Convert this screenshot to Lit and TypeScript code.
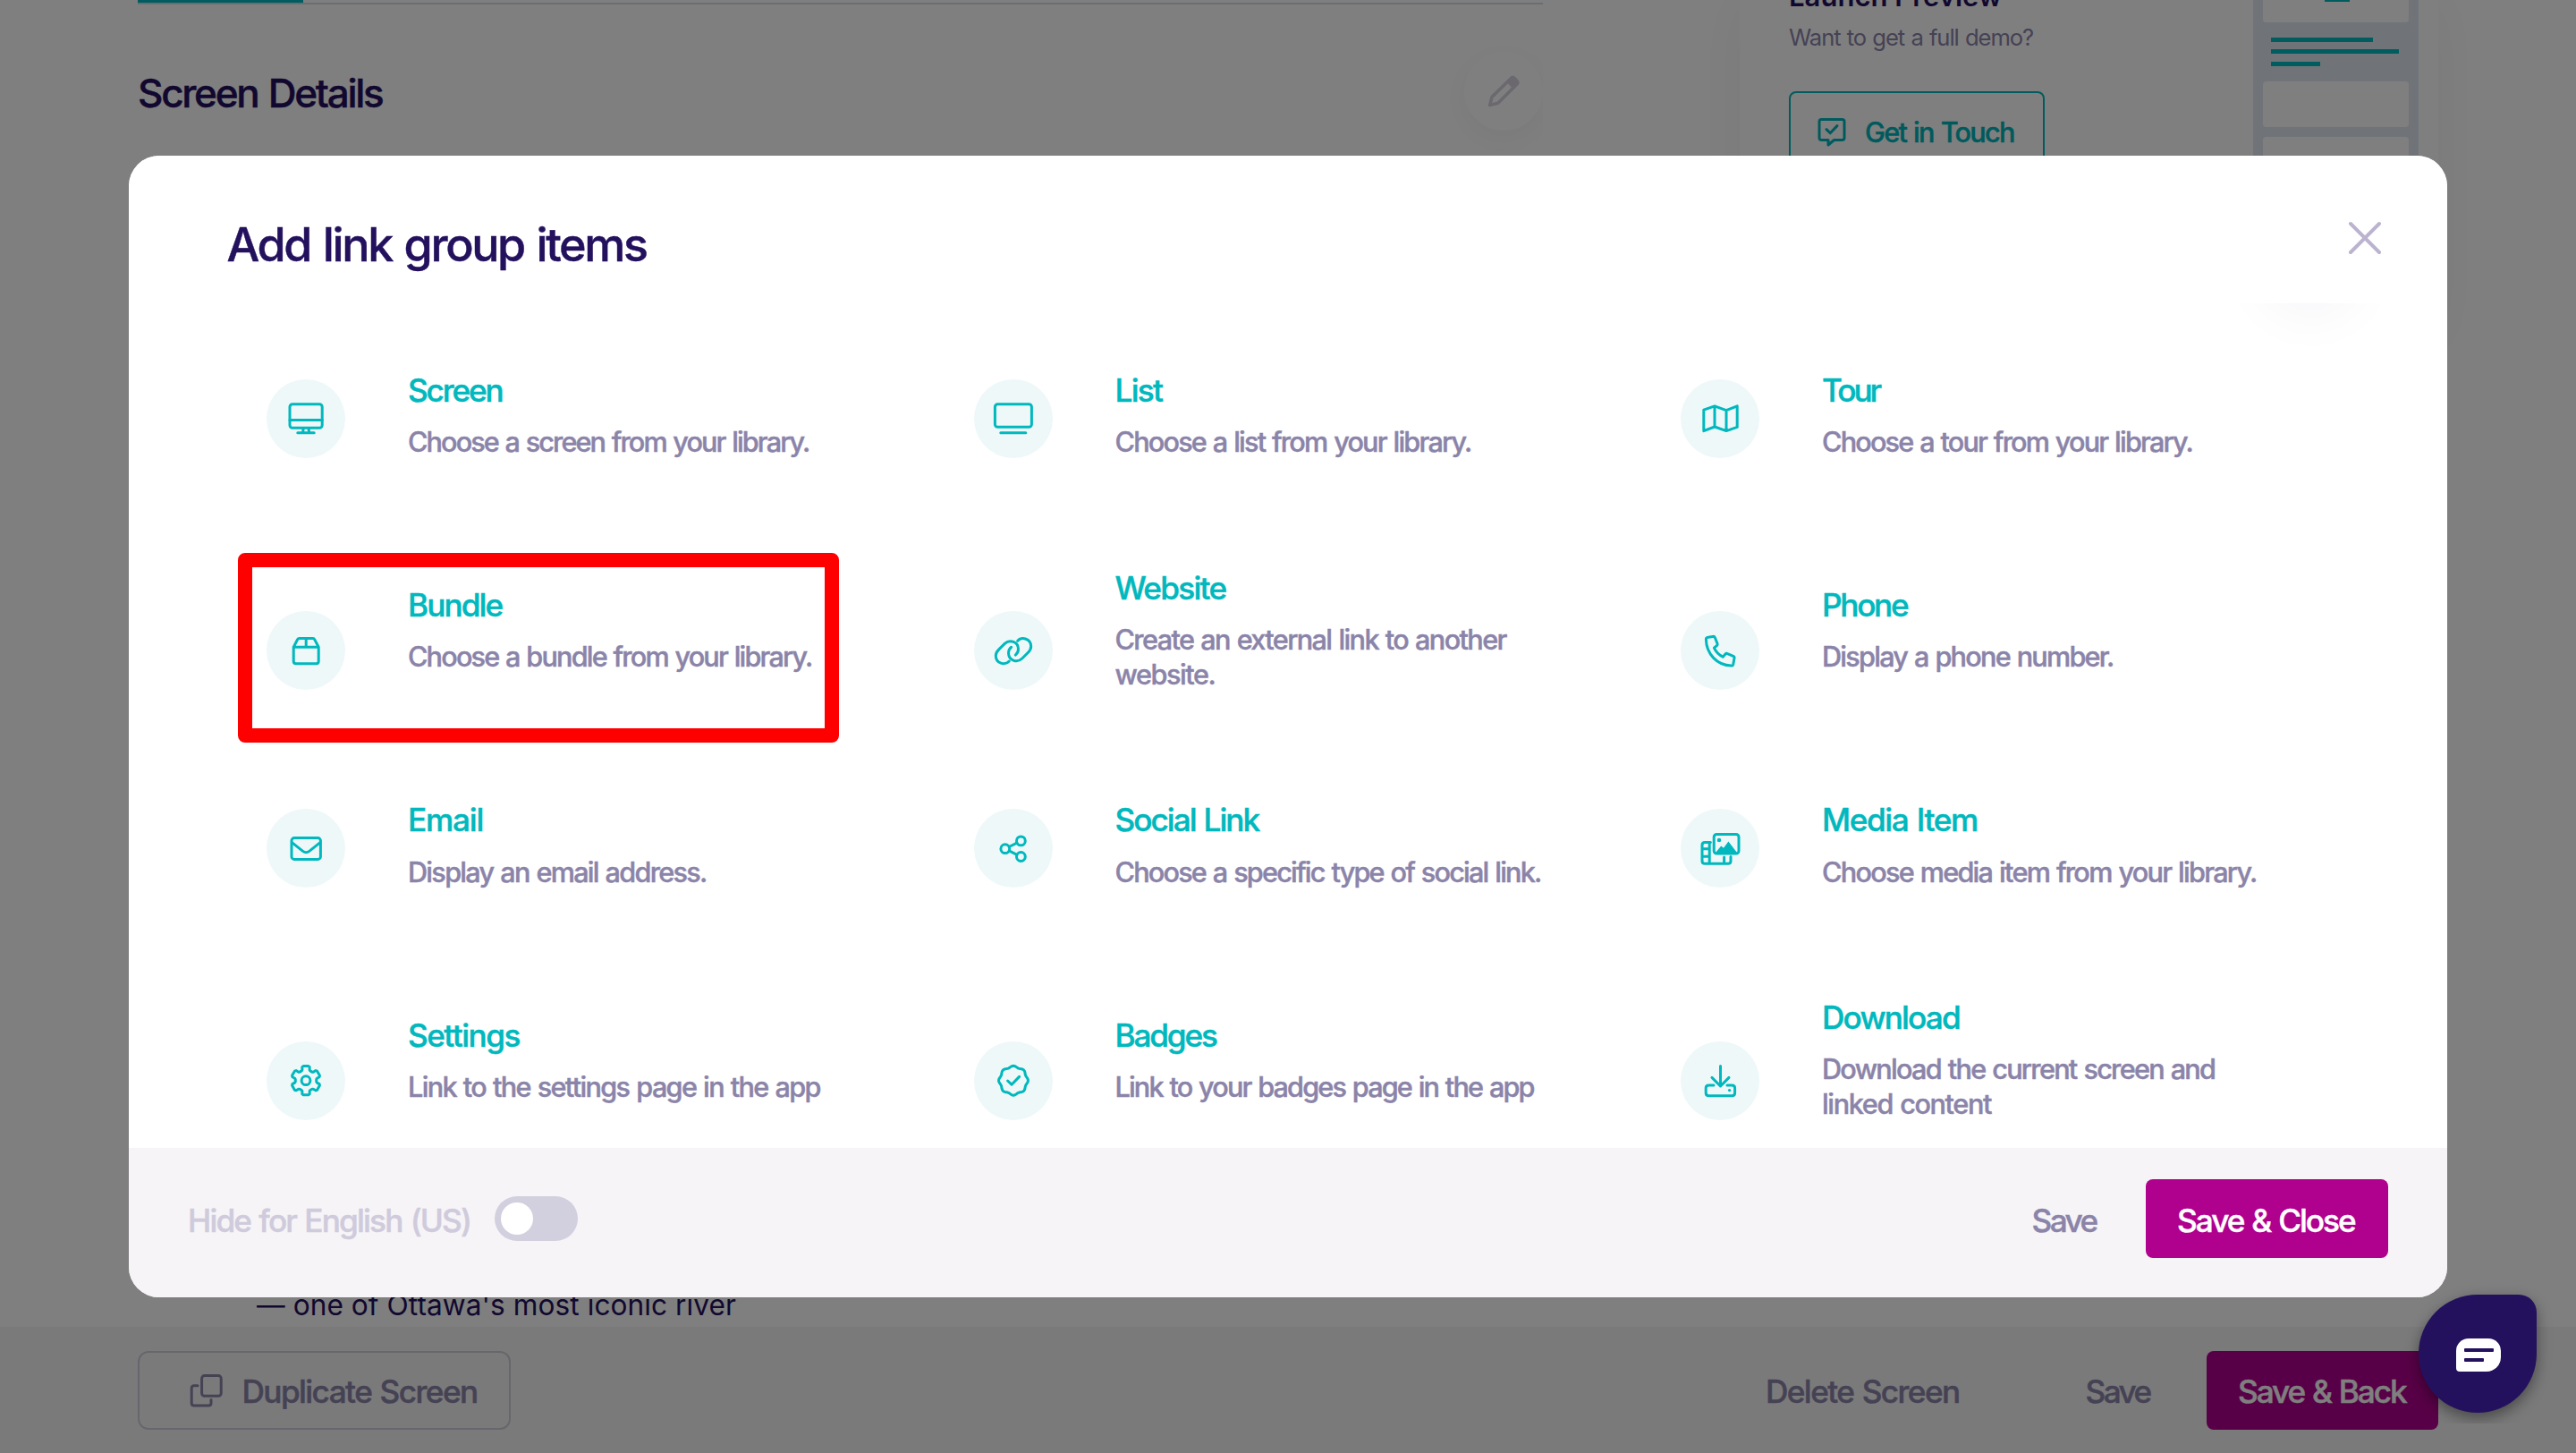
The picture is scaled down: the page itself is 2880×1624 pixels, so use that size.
import { LitElement, html, css, svg, nothing } from "lit";
import { customElement, property } from "lit/decorators.js";

const FAMILY = `Inter, "Liberation Sans", sans-serif`;
const MEDIUM = 500;
const ctx = document.createElement("canvas").getContext("2d")!;

/** Letter and word spacing that make one line of text span the given width. */
function spacing(text: string, width: number, size: number, weight: number): { letter: string; word: string } {
  ctx.font = `${weight} ${size}px ${FAMILY}`;
  const m = ctx.measureText(text);
  const ink = m.actualBoundingBoxLeft + m.actualBoundingBoxRight;
  const word = width < ink ? size * 0.045 : 0;
  const gaps = text.split(" ").length - 1;
  return { letter: ((width - ink - word * gaps) / (text.length - 1)).toFixed(3), word: word.toFixed(2) };
}

@customElement("fit-line")
export class FitLine extends LitElement {
  @property() text = "";
  @property({ type: Number }) width = 0;
  @property({ type: Number }) size = 30;
  @property({ type: Number }) weight = MEDIUM;

  static styles = css`
    :host { display: block; white-space: nowrap; }
    span { display: block; }
    .medium { -webkit-text-stroke: 0.45px currentColor; }
  `;

  render() {
    const s = spacing(this.text, this.width, this.size, this.weight);
    return html`<span class=${this.weight === MEDIUM ? "medium" : "plain"} style="font-size:${this.size}px;font-weight:${this.weight};letter-spacing:${s.letter}px;word-spacing:${s.word}px">${this.text}</span>`;
  }
}

const line = (text: string, width: number, size: number, weight = MEDIUM, cls = "") =>
  html`<fit-line class=${cls} .text=${text} .width=${width} .size=${size} .weight=${weight}></fit-line>`;

function polar(r: number, deg: number): string {
  const a = ((deg - 90) * Math.PI) / 180;
  return `${(44 + r * Math.cos(a)).toFixed(2)} ${(43.7 + r * Math.sin(a)).toFixed(2)}`;
}

const gearPath =
  "M" +
  [0, 60, 120, 180, 240, 300]
    .map((t) => [polar(11.8, t - 24), polar(12.6, t - 19), polar(15.6, t - 15.5), polar(16.4, t - 10), polar(16.4, t + 10), polar(15.6, t + 15.5), polar(12.6, t + 19), polar(11.8, t + 24)].join(" L"))
    .join(" L") +
  "Z";

const sealPath =
  "M" +
  Array.from({ length: 96 }, (_, i) => {
    const d = i * 3.75;
    return polar(15.6 + 0.85 * Math.cos((8 * d * Math.PI) / 180), d);
  }).join(" L") +
  "Z";

const icons: Record<string, unknown> = {
  screen: svg`<rect x="26" y="27.8" width="36.2" height="26.4" rx="3"/><path d="M26 45.5H62.2M34.8 59.7H53.2M41.2 54.5L40.6 59.5M47 54.5L47.6 59.5"/>`,
  list: svg`<rect x="23.4" y="27.8" width="41" height="25.4" rx="3"/><path d="M29.8 59.7H57.8"/>`,
  tour: svg`<path d="M25.8 34.2L38 29.8L51 34.6L63.2 29.8V53.4L51 57.6L38 53L25.8 57.6ZM38 29.8V53M51 34.6V57.6"/>`,
  bundle: svg`<path d="M30.2 40.2L34.6 31.8Q35.2 30.6 36.6 30.6H51.8Q53.2 30.6 53.8 31.8L58.2 40.2V56Q58.2 58.8 55.4 58.8H33Q30.2 58.8 30.2 56ZM30.2 40.2H58.2M44.2 30.6V40.2"/>`,
  website: svg`<path d="M48.7 33.3C53.5 28 63.7 31 63.7 39.5C63.7 42.5 62.3 44.5 60 46.8L53.7 53C48 58.5 38.5 55 38.5 46.8C38.5 44 39.5 42 41.7 40.3M39.3 56.1C34.5 61.4 24.3 58.4 24.3 49.9C24.3 46.9 25.7 44.9 28 42.6L34.3 36.4C40 30.9 49.5 34.4 49.5 42.6C49.5 45.4 48.5 47.4 46.3 49.1"/>`,
  phone: svg`<path d="M30.8 29.3L36 28.4C37.2 28.2 38 28.8 38.4 29.8L41 36.2C41.4 37.2 41.1 38 40.4 38.7L37.4 41.2C39.5 45.8 42.6 49 47.2 51.2L49.8 48.2C50.5 47.4 51.4 47.2 52.3 47.6L58.8 50.3C59.8 50.8 60.3 51.5 60 52.6L58.8 59.3C58.5 60.6 57.8 61 56.5 61C41 60.8 28.6 48 28.4 31.6C28.4 30.3 29.2 29.5 30.8 29.3Z"/>`,
  email: svg`<rect x="28" y="32.6" width="32.4" height="23.8" rx="3"/><path d="M28.4 37.6L40.6 47.4Q44.2 50.2 47.8 47.4L60 37.6"/>`,
  social: svg`<circle cx="34.8" cy="44.7" r="4.9"/><circle cx="52.4" cy="35.9" r="4.9"/><circle cx="52.4" cy="53.5" r="4.9"/><path d="M39.2 42.5L48 38.1M39.2 46.9L48 51.3"/>`,
  media: svg`<rect x="37.2" y="28.4" width="27.8" height="21.6" rx="3"/><path class="solid" d="M38.6 49.5L45.2 41.4L48 43.8L53.4 36.4L63.4 49.5Z"/><circle class="solid" cx="43" cy="35" r="2.3"/><path d="M33.4 37.6H27Q24 37.6 24 40.6V58.2Q24 61.2 27 61.2H53Q56 61.2 56 58.2V53.6M32.2 37.6V61.2M48.6 54V61.2M24 44.8H32M24 53.2H32"/>`,
  settings: svg`<path d=${gearPath}/><circle cx="44" cy="43.7" r="4.9"/>`,
  badges: svg`<path d=${sealPath}/><path d="M37.6 44L42 48.2L50.6 39.4"/>`,
  download: svg`<path d="M44.5 27.4V50M35 40.4L44.5 50L54 40.4M37 49H31.4Q28.2 49 28.2 52V57.6Q28.2 60.8 31.4 60.8H57.4Q60.6 60.8 60.6 57.6V52Q60.6 49 57.4 49H52"/><circle class="solid" cx="54.6" cy="54.6" r="1.7"/>`,
};

interface Choice {
  icon: string;
  title: [string, number];
  lines: [string, number][];
  marked?: boolean;
}

const choices: Choice[] = [
  { icon: "screen", title: ["Screen", 104.5], lines: [["Choose a screen from your library.", 447]] },
  { icon: "list", title: ["List", 52.5], lines: [["Choose a list from your library.", 396.5]] },
  { icon: "tour", title: ["Tour", 65.5], lines: [["Choose a tour from your library.", 412.5]] },
  { icon: "bundle", title: ["Bundle", 104.5], lines: [["Choose a bundle from your library.", 450]], marked: true },
  { icon: "website", title: ["Website", 125], lines: [["Create an external link to another", 438], ["website.", 111]] },
  { icon: "phone", title: ["Phone", 95], lines: [["Display a phone number.", 323]] },
  { icon: "email", title: ["Email", 81.5], lines: [["Display an email address.", 331]] },
  { icon: "social", title: ["Social Link", 162], lines: [["Choose a specific type of social link.", 474.5]] },
  { icon: "media", title: ["Media Item", 171], lines: [["Choose media item from your library.", 484]] },
  { icon: "settings", title: ["Settings", 124.5], lines: [["Link to the settings page in the app", 459.5]] },
  { icon: "badges", title: ["Badges", 112.5], lines: [["Link to your badges page in the app", 467]] },
  { icon: "download", title: ["Download", 152], lines: [["Download the current screen and", 437], ["linked content", 188]] },
];

@customElement("app-root")
export class AppRoot extends LitElement {
  static styles = css`
    :host { display: block; position: relative; width: 2880px; height: 1624px; overflow: hidden; background: #fff; font-family: Inter, "Liberation Sans", sans-serif; color: #24115e; }
    * { box-sizing: border-box; }
    svg { display: block; fill: none; stroke: currentColor; stroke-width: 3; stroke-linecap: round; stroke-linejoin: round; }
    .solid { fill: currentColor; stroke: none; }

    .page { display: flex; flex-direction: column; height: 1624px; }
    .content { display: flex; height: 1483px; }
    .main { display: flex; flex-direction: column; width: 1571px; margin-left: 154px; overflow: hidden; }
    .tabs { height: 5px; border-bottom: 2px solid #d3dde6; flex: none; }
    .tab { width: 185px; height: 3px; background: #00b8bd; }
    .heading { display: flex; justify-content: space-between; height: 97px; margin-top: 52.7px; line-height: 60px; }
    .heading .name { padding-top: 16px; }
    .edit { width: 88px; height: 88px; border-radius: 50%; color: #d6d2df; background: #fff; box-shadow: 0 8px 36px rgba(36, 17, 94, 0.05); flex: none; }
    .paragraph { margin-top: auto; padding-left: 133px; height: 44px; line-height: 40px; }

    .card { display: flex; justify-content: space-between; width: 781px; height: 380px; margin-left: 220px; padding: 0 22px 0 55px; background: #fff; box-shadow: 0 0 60px rgba(36, 17, 94, 0.05); }
    .pitch .lead { line-height: 40px; margin-top: -24px; }
    .pitch .ask { line-height: 36px; margin-top: 7.5px; color: #8b84a9; height: 36px; }
    .touch { display: flex; align-items: center; width: 286px; height: 92px; margin-top: 42px; padding-left: 30px; gap: 21px; border: 2px solid #00b8bd; border-radius: 8px; color: #00b5ba; line-height: 40px; }
    .mock { width: 185px; padding: 0 11px; background: #e0e8f2; display: flex; flex-direction: column; }
    .tile { height: 51px; border-radius: 4px; background: #fff; margin-bottom: 11px; flex: none; }
    .tile.first { height: 25px; margin-bottom: 17px; border-radius: 0 0 4px 4px; padding-left: 69px; }
    .nub { width: 28px; height: 2px; background: #00b8bd; }
    .bar { height: 5px; margin: 0 0 8.3px 9px; background: #00b8bd; flex: none; }
    .b1 { width: 114px; }
    .b2 { width: 143px; }
    .b3 { width: 55px; margin-bottom: 17px; }

    .actions { display: flex; align-items: flex-start; height: 141px; padding: 27px 154px 0; background: #f5f4f5; color: #8b84a9; line-height: 48px; }
    .foot fit-line { padding-top: 3px; }
    .actions fit-line { padding-top: 2px; }
    .duplicate { display: flex; align-items: center; width: 417px; height: 88px; padding-left: 56px; gap: 20.5px; border: 2px solid #d0ccd9; border-radius: 12px; }
    .flat { display: flex; align-items: center; height: 88px; }
    .delete { margin-left: auto; width: 217.5px; }
    .keep { margin-left: 140px; width: 74.5px; }
    .primary { display: flex; align-items: center; height: 88px; padding-left: 35px; border-radius: 8px; background: #b0008e; color: #fff; line-height: 48px; }
    .back { width: 259px; margin-left: 61px; }

    .scrim { position: absolute; inset: 0; background: rgba(0, 0, 0, 0.5); }
    .modal { position: absolute; left: 144px; top: 174px; width: 2592px; height: 1276px; display: flex; flex-direction: column; border-radius: 34px; overflow: hidden; background: #fff; }
    .head { display: flex; justify-content: space-between; height: 165px; padding: 70px 73px 0 109.5px; line-height: 60px; background: #fff; z-index: 1; flex: none; }
    .close { margin-top: 2.5px; color: #bbb3cf; }
    .close svg { stroke-width: 4; }
    .list { position: relative; flex: 1; padding: 75px 66px 0 154px; overflow: hidden; }
    .glow { position: absolute; left: 2395px; top: -94px; width: 88px; height: 88px; border-radius: 50%; box-shadow: 0 8px 60px 14px rgba(36, 17, 94, 0.04); }
    .grid { display: grid; grid-template-columns: repeat(3, 790.5px); row-gap: 121.4px; }
    .choice { position: relative; display: flex; align-items: center; min-height: 99.3px; gap: 70px; }
    .disc { align-self: flex-end; flex: none; width: 88px; height: 88px; margin-bottom: 1.5px; border-radius: 50%; background: #eef8f9; color: #00b8bd; }
    .name1 { line-height: 44px; color: #00b8bd; }
    .text { line-height: 39px; color: #8b84a9; margin-top: 16.3px; }
    .mark { position: absolute; left: -32px; top: -16.5px; width: 672px; height: 212px; border: 16px solid #f00; border-radius: 8px; }

    .foot { display: flex; align-items: flex-start; height: 167px; padding: 35px 66px 0 66px; background: #f6f4f6; line-height: 48px; flex: none; }
    .hide { display: flex; align-items: center; height: 88px; gap: 26px; color: #cfcbdc; }
    .hide .label { width: 317px; }
    .toggle { display: flex; align-items: center; width: 93px; height: 50px; padding-left: 7px; border-radius: 25px; background: #d2d0de; }
    .knob { width: 36px; height: 36px; border-radius: 50%; background: #fff; }
    .foot .flat { margin-left: auto; width: 74.5px; color: #8b84a9; }
    .finish { width: 271px; margin-left: 53px; }

    .chatwrap { position: absolute; left: 2660px; top: 1400px; width: 220px; height: 191px; padding: 47px 0 0 44px; overflow: hidden; }
    .chat { display: flex; flex-direction: column; justify-content: center; align-items: center; width: 132px; height: 132px; border-radius: 66px 20px 66px 66px; background: #24115e; box-shadow: 0 6px 16px rgba(0, 0, 0, 0.4); }
    .bubble { width: 50px; height: 37px; margin-top: 3px; margin-left: 2px; padding: 11px 0 0 9px; border-radius: 14px 14px 16px 4px; background: #fff; }
    .dash { height: 4px; border-radius: 1px; background: #24115e; width: 33px; }
    .dash.short { width: 22px; margin-top: 7px; }
  `;

  private choice(c: Choice) {
    return html`<div class="choice">
      <div class="disc"><svg width="88" height="88" viewBox="0 0 88 88">${icons[c.icon]}</svg></div>
      <div>
        ${line(c.title[0], c.title[1], 35.2, MEDIUM, "name1")}
        <div class="text">${c.lines.map(([t, w]) => line(t, w, 30.6))}</div>
      </div>
      ${c.marked ? html`<div class="mark"></div>` : nothing}
    </div>`;
  }

  render() {
    return html`
      <div class="page">
        <div class="content">
          <div class="main">
            <div class="tabs"><div class="tab"></div></div>
            <div class="heading">
              ${line("Screen Details", 272, 44, MEDIUM, "name")}
              <div class="edit">
                <svg width="88" height="88" viewBox="0 0 88 88">
                  <path stroke-width="3.6" d="M28.6 59.6L31 50.4L52.6 29.2Q54.4 27.6 56.2 29.4L59 32.4Q60.6 34.2 59 36L37.8 57.2Z" />
                  <path class="solid" d="M47 33.5L52.6 28Q54.8 26.2 57.2 28.4L60.2 31.4Q62.4 34 60.4 36.2L54.8 41.6Z" />
                </svg>
              </div>
            </div>
            <div class="paragraph">${line("— one of Ottawa's most iconic river", 536, 31.6, 400)}</div>
          </div>
          <div class="card">
            <div class="pitch">
              ${line("Launch Preview", 236, 31, 600, "lead")}
              ${line("Want to get a full demo?", 273, 25.6, 400, "ask")}
              <div class="touch">
                <svg width="32" height="34" viewBox="0 0 32 34">
                  <path d="M4.5 2.5H27.5Q30 2.5 30 5V23Q30 25.5 27.5 25.5H18.5L12 31V25.5H4.5Q2 25.5 2 23V5Q2 2.5 4.5 2.5ZM10 13.6L14.2 17.8L22 9.6" />
                </svg>
                ${line("Get in Touch", 166, 30.6)}
              </div>
            </div>
            <div class="mock">
              <div class="tile first"><div class="nub"></div></div>
              <div class="bar b1"></div>
              <div class="bar b2"></div>
              <div class="bar b3"></div>
              <div class="tile"></div>
              <div class="tile"></div>
            </div>
          </div>
        </div>
        <div class="actions">
          <div class="duplicate">
            <svg width="38" height="38" viewBox="0 0 38 38">
              <rect x="13.6" y="2.6" width="21.6" height="22.6" rx="3" />
              <path d="M9 13.8H5Q2.2 13.8 2.2 16.6V33.2Q2.2 36 5 36H21Q24 36 24 33.2V29.6" />
            </svg>
            ${line("Duplicate Screen", 260.5, 35.2)}
          </div>
          <div class="flat delete">${line("Delete Screen", 214, 35.2)}</div>
          <div class="flat keep">${line("Save", 73, 35.2)}</div>
          <div class="primary back">${line("Save & Back", 189, 35.2)}</div>
        </div>
      </div>
      <div class="scrim"></div>
      <div class="modal">
        <div class="head">
          ${line("Add link group items", 468.5, 52)}
          <div class="close"><svg width="38" height="38" viewBox="0 0 38 38"><path d="M3 3L35 35M35 3L3 35" /></svg></div>
        </div>
        <div class="list">
          <div class="glow"></div>
          <div class="grid">${choices.map((c) => this.choice(c))}</div>
        </div>
        <div class="foot">
          <div class="hide">
            ${line("Hide for English (US)", 313, 35.2, MEDIUM, "label")}
            <div class="toggle"><div class="knob"></div></div>
          </div>
          <div class="flat">${line("Save", 73, 35.2)}</div>
          <div class="primary finish">${line("Save & Close", 199, 35.2)}</div>
        </div>
      </div>
      <div class="chatwrap">
        <div class="chat">
          <div class="bubble"><div class="dash"></div><div class="dash short"></div></div>
        </div>
      </div>
    `;
  }
}
